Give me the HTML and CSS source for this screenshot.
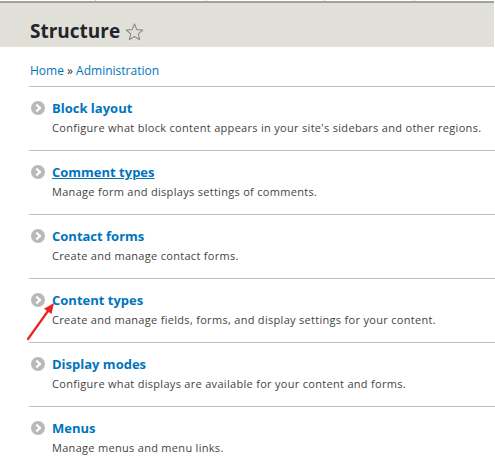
FILE: index.html
```html
<!DOCTYPE html>
<html lang="en">
<head>
  <meta charset="UTF-8">
  <meta name="viewport" content="width=device-width, initial-scale=1.0">
  <title>Structure</title>
  <link rel="stylesheet" href="styles.css">
</head>
<body>

<!-- Top toolbar edge -->
<div class="toolbar">
  <span class="tab tab-1"></span>
  <span class="tab tab-2"></span>
  <span class="tab tab-3"></span>
  <span class="tab tab-4"></span>
</div>

<!-- Page title -->
<div class="page-header">
  <h1>Structure
    <svg class="star" width="19" height="18" viewBox="0 0 19 18">
      <path d="M9.5 1 L11.8 6.6 L17.8 7 L13.2 10.8 L14.7 16.7 L9.5 13.5 L4.3 16.7 L5.8 10.8 L1.2 7 L7.2 6.6 Z" fill="none" stroke="#8b8b85" stroke-width="1.1" stroke-linejoin="round"/>
    </svg>
  </h1>
</div>

<div class="content">
  <div class="breadcrumb"><a href="#">Home</a> &raquo; <a href="#">Administration</a></div>

  <ul class="admin-list">
    <li>
      <a href="#" class="item-title"><span class="bullet"></span>Block layout</a>
      <div class="description">Configure what block content appears in your site's sidebars and other regions.</div>
    </li>
    <li>
      <a href="#" class="item-title hover"><span class="bullet"></span>Comment types</a>
      <div class="description">Manage form and displays settings of comments.</div>
    </li>
    <li>
      <a href="#" class="item-title"><span class="bullet"></span>Contact forms</a>
      <div class="description">Create and manage contact forms.</div>
    </li>
    <li>
      <a href="#" class="item-title"><span class="bullet"></span>Content types</a>
      <div class="description">Create and manage fields, forms, and display settings for your content.</div>
    </li>
    <li>
      <a href="#" class="item-title"><span class="bullet"></span>Display modes</a>
      <div class="description">Configure what displays are available for your content and forms.</div>
    </li>
    <li>
      <a href="#" class="item-title"><span class="bullet"></span>Menus</a>
      <div class="description">Manage menus and menu links.</div>
    </li>
  </ul>
</div>

<!-- red pointer arrow -->
<svg class="pointer" width="34" height="42" viewBox="0 0 34 42">
  <line x1="4" y1="39" x2="24" y2="11" stroke="#ee2222" stroke-width="2.2" stroke-linecap="round"/>
  <path d="M30 3 L27.5 14 L20 8.8 Z" fill="#ee2222"/>
</svg>

</body>
</html>
```

FILE: styles.css
```css
body {
  margin: 0;
  padding: 0;
  background-color: #fff;
  font-family: 'Open Sans', 'Liberation Sans', sans-serif;
  color: #333;
  position: relative;
}
a {
  color: #0074bd;
  text-decoration: none;
}
.toolbar {
  height: 1px;
  display: flex;
  background-color: #fff;
}
.tab {
  border-right: 1px solid #c8c8c4;
}
.tab-1 { width: 95px; }
.tab-2 { width: 110px; }
.tab-3 { width: 117px; }
.tab-4 { width: 89px; }
.page-header {
  background-color: #e0e0d8;
  border-top: 2px solid #a2a29d;
  height: 46px;
  padding-left: 30px;
  margin-right: 1px;
  box-sizing: border-box;
  padding-top: 16px;
}
.page-header h1 {
  margin: 0;
  font-size: 19px;
  line-height: 24px;
  font-weight: bold;
  color: #232429;
  display: flex;
  align-items: center;
}
.star {
  margin-left: 5px;
  margin-top: 1px;
}
.content {
  padding-left: 29px;
}
.breadcrumb {
  font-size: 12px;
  line-height: 18px;
  padding: 15px 0 6px 1px;
  border-bottom: 1px solid #c0c0c0;
}
.admin-list {
  list-style: none;
  margin: 0;
  padding: 0;
}
.admin-list li {
  padding: 12px 0 13px 23px;
  border-bottom: 1px solid #c0c0c0;
  position: relative;
}
.admin-list li:last-child {
  border-bottom: none;
}
.item-title {
  display: block;
  font-size: 13px;
  line-height: 18px;
  font-weight: bold;
  margin-bottom: 2px;
}
.item-title.hover {
  text-decoration: underline;
}
.bullet {
  position: absolute;
  left: 2px;
  top: 14px;
  width: 14px;
  height: 14px;
  border-radius: 50%;
  background-color: #b9b9b9;
}
.bullet::after {
  content: "";
  position: absolute;
  left: 3px;
  top: 4px;
  width: 4px;
  height: 4px;
  border-top: 2px solid #fff;
  border-right: 2px solid #fff;
  transform: rotate(45deg);
}
.description {
  font-size: 11px;
  line-height: 18px;
  color: #444;
  letter-spacing: 0.3px;
}
.pointer {
  position: absolute;
  left: 24px;
  top: 300px;
}
```
